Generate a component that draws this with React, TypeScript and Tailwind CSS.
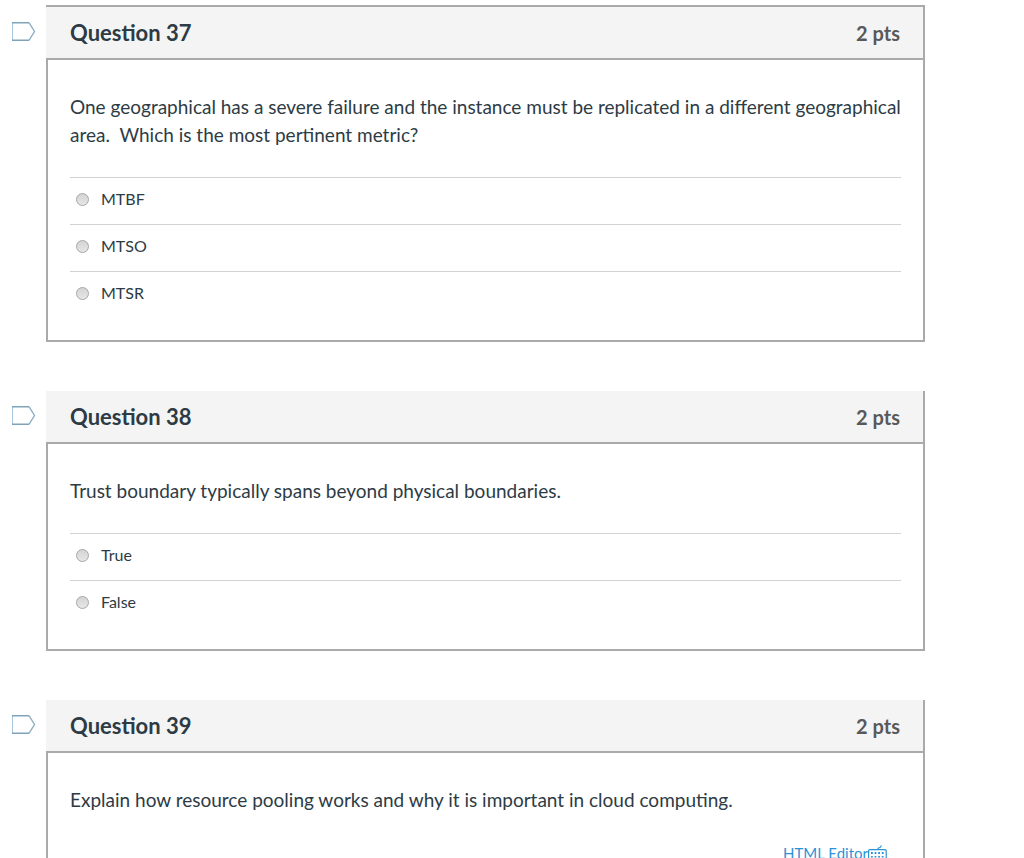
import { useState } from "react";

interface Question {
  number: number;
  points: number;
  text: string;
  answers: string[];
}

const QUESTIONS: Question[] = [
  {
    number: 37,
    points: 2,
    text: "One geographical has a severe failure and the instance must be replicated in a different geographical area.\u00a0 Which is the most pertinent metric?",
    answers: ["MTBF", "MTSO", "MTSR"],
  },
  {
    number: 38,
    points: 2,
    text: "Trust boundary typically spans beyond physical boundaries.",
    answers: ["True", "False"],
  },
  {
    number: 39,
    points: 2,
    text: "Explain how resource pooling works and why it is important in cloud computing.",
    answers: [],
  },
];

function FlagIcon() {
  return (
    <svg width="24" height="20" viewBox="0 0 24 20" fill="none" aria-hidden="true">
      <path d="M0.5 0.5V18.5" stroke="#a9c8dc" />
      <path d="M0 0.7H17M0 18.3H17" stroke="#7fa3bb" strokeWidth="1.4" />
      <path d="M17 0.7L22.5 9.5L17 18.3" stroke="#8fb0c4" strokeWidth="1.4" />
    </svg>
  );
}

function KeyboardIcon() {
  return (
    <svg width="19" height="16" viewBox="0 0 19 16" fill="none" stroke="#2d93d6" aria-hidden="true">
      <rect x="0.6" y="4.6" width="17.6" height="10.4" rx="1.2" strokeWidth="1.2" />
      <path d="M9.5 4.5L10.5 3L12 2.5L13.5 0.5" strokeWidth="1.2" />
      <path d="M3 8H16" strokeWidth="1.8" strokeDasharray="1.8 1.8" />
      <path d="M3 11.8H16" strokeWidth="1.6" strokeDasharray="1.8 1.8" />
    </svg>
  );
}

function AnswerList({ question }: { question: Question }) {
  const [selected, setSelected] = useState<string | null>(null);

  return (
    <fieldset className="mt-7" aria-label={`Question ${question.number}`}>
      {question.answers.map((answer) => (
        <label
          key={answer}
          className="flex h-[47px] items-center border-t border-[#d2d2d2] pb-1 pl-1.5 text-base"
        >
          <input
            type="radio"
            name={`question-${question.number}`}
            className="mr-3 size-[13px] appearance-none rounded-full border border-[#a6a6a6] bg-linear-to-b from-[#d4d4d4] to-[#e6e6e6] checked:border-4 checked:border-[#2d3b45]"
            checked={selected === answer}
            onChange={() => setSelected(answer)}
          />
          {answer}
        </label>
      ))}
    </fieldset>
  );
}

function QuestionCard({ question, first }: { question: Question; first: boolean }) {
  return (
    <section className="flex items-start">
      <button
        type="button"
        aria-label={`Flag question ${question.number}`}
        className={`w-[34px] shrink-0 pt-[15px] ${first ? "border-t-2 border-transparent" : ""}`}
      >
        <FlagIcon />
      </button>
      <div className="min-w-0 flex-1">
        <header
          className={`border-r-2 border-b-2 border-[#aaaaaa] bg-[#f4f4f4] ${first ? "border-t-2" : ""}`}
        >
          <div className="flex h-[51px] items-center justify-between pr-[23px] pl-6">
            <h2 className="text-[22px] font-bold">Question {question.number}</h2>
            <span className="text-xl font-bold text-[#595959]">{question.points} pts</span>
          </div>
        </header>
        <div className="border-x-2 border-b-2 border-[#aaaaaa] px-[22px] pt-[33px] pb-[22px]">
          <p className="text-[19px] leading-7">{question.text}</p>
          {question.answers.length > 0 ? (
            <AnswerList question={question} />
          ) : (
            <>
              <div className="mt-7 flex justify-end pr-3.5">
                <a href="#editor" className="flex items-center text-[15px] leading-[22px] text-[#2d93d6]">
                  HTML Editor
                  <KeyboardIcon />
                </a>
              </div>
              <textarea
                aria-label={`Answer to question ${question.number}`}
                className="mt-3 h-48 w-full border border-[#c7cdd1] p-2"
              />
            </>
          )}
        </div>
      </div>
    </section>
  );
}

export default function App() {
  return (
    <main className="flex h-screen flex-col gap-[49px] overflow-hidden bg-white pt-[5px] pr-[99px] pl-3 font-['Lato',sans-serif] text-[#2d3b45]">
      {QUESTIONS.map((question, i) => (
        <QuestionCard key={question.number} question={question} first={i === 0} />
      ))}
    </main>
  );
}
